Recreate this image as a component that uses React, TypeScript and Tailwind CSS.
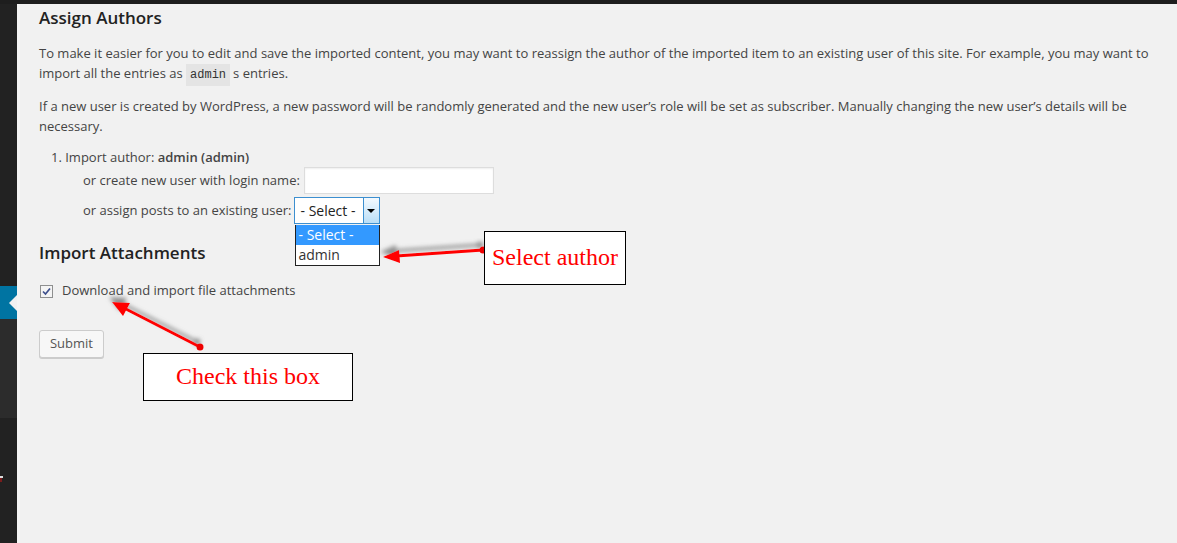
import React from 'react';

function Sidebar() {
    return (
        <div className="flex w-[17px] flex-none flex-col bg-[#222]">
            <div className="h-[282px]" />
            <div className="relative h-[33px] bg-[#0074a2]">
                <span className="absolute top-[9px] right-0 h-0 w-0 border-y-[8px] border-r-[8px] border-y-transparent border-r-[#f1f1f1]" />
            </div>
            <div className="h-[99px] bg-[#2c2c2c]" />
            <div className="relative flex-1">
                <span className="absolute top-[58px] left-0 h-[2px] w-[3px] bg-[#ddd]" />
                <span className="absolute top-[60px] left-0 h-[4px] w-[2px] bg-[#7a1c1c]" />
            </div>
        </div>
    );
}

function Arrows() {
    return (
        <svg className="pointer-events-none absolute inset-0" width="1177" height="543">
            <defs>
                <filter id="sh" x="-20%" y="-50%" width="140%" height="200%">
                    <feDropShadow dx="-3" dy="-5" stdDeviation="2" floodColor="#777" floodOpacity="0.8" />
                </filter>
            </defs>
            <g filter="url(#sh)">
                <line x1="483" y1="250" x2="396" y2="256" stroke="#f00" strokeWidth="3" strokeLinecap="round" />
                <polygon points="383,257 399,250 400,263" fill="#f00" />
                <circle cx="483" cy="250" r="3.5" fill="#e00" />
            </g>
            <g filter="url(#sh)">
                <line x1="200" y1="347" x2="124" y2="308" stroke="#f00" strokeWidth="3" strokeLinecap="round" />
                <polygon points="112,302 130,303 123,316" fill="#f00" />
                <circle cx="200" cy="347" r="3.5" fill="#e00" />
            </g>
        </svg>
    );
}

export default function App() {
    return (
        <div
            className="relative flex h-[543px] w-[1177px] flex-col overflow-hidden bg-[#f1f1f1] text-[13px] text-[#444]"
            style={{ fontFamily: '"Open Sans", sans-serif' }}
        >
            <div className="h-[4px] flex-none bg-[#1e1e1e]" />
            <div className="flex flex-1">
                <Sidebar />
                <div className="w-[3px] flex-none bg-[#f5f5f5]" />
                <div className="flex flex-1 flex-col pr-[20px] pl-[19px]">
                    <h3 className="mt-[2px] h-[24px] text-[17px] leading-[24px] font-semibold text-[#222]">
                        Assign Authors
                    </h3>
                    <p className="mt-[13px] leading-[20px]">
                        To make it easier for you to edit and save the imported content, you may want to reassign the author of the imported item to an existing user of this site. For example, you may want to import all the entries as{' '}
                        <code className="bg-[#e4e4e4] px-[4px] py-[4px] text-[12px] leading-none text-[#333]" style={{ fontFamily: '"Liberation Mono", monospace' }}>
                            admin
                        </code>
                        <span className="ml-[3px]">s entries.</span>
                    </p>
                    <p className="mt-[13px] leading-[20px]">
                        If a new user is created by WordPress, a new password will be randomly generated and the new user’s role will be set as subscriber. Manually changing the new user’s details will be necessary.
                    </p>
                    <div className="mt-[11px] flex flex-col pl-[12px]">
                        <div className="h-[20px] leading-[20px]">
                            1. Import author: <span className="font-semibold">admin (admin)</span>
                        </div>
                        <div className="flex h-[27px] items-center pl-[32px]">
                            <span>or create new user with login name:</span>
                            <div className="ml-[4px] h-[27px] w-[190px] border border-[#ddd] bg-white shadow-[inset_0_1px_2px_rgba(0,0,0,0.07)]" />
                        </div>
                        <div className="mt-[3px] flex h-[27px] items-center pl-[32px]">
                            <span>or assign posts to an existing user:</span>
                            <div className="relative ml-[2px] flex h-[27px] w-[86px] border border-[#3c8fd0] bg-white">
                                <div className="flex flex-1 items-center pl-[6px] text-[14px] text-[#222]">- Select -</div>
                                <div className="flex w-[16px] items-center justify-center border-l border-[#3c8fd0] bg-gradient-to-b from-[#f4faff] to-[#b9def7]">
                                    <span className="h-0 w-0 border-x-[4px] border-t-[4px] border-x-transparent border-t-black" />
                                </div>
                                <div className="absolute top-[27px] left-0 z-10 flex w-[85px] flex-col border border-t-0 border-[#222] bg-white text-[14px]">
                                    <div className="h-[20px] bg-[#3399ff] pl-[3px] leading-[20px] text-white">- Select -</div>
                                    <div className="h-[20px] pl-[3px] leading-[20px] text-[#333]">admin</div>
                                </div>
                            </div>
                        </div>
                    </div>
                    <h3 className="mt-[17px] h-[24px] text-[17px] leading-[24px] font-semibold text-[#222]">
                        Import Attachments
                    </h3>
                    <label className="mt-[16px] flex h-[20px] items-center">
                        <span className="ml-[1px] flex h-[13px] w-[13px] items-center justify-center border border-[#8e8f8f] bg-[#f4f4f4]">
                            <svg width="9" height="9" viewBox="0 0 9 9">
                                <path d="M1 4.5 L3.5 7 L8 1.5" fill="none" stroke="#3d4f8c" strokeWidth="1.7" />
                            </svg>
                        </span>
                        <span className="ml-[9px]">Download and import file attachments</span>
                    </label>
                    <div className="mt-[29px]">
                        <button
                            type="button"
                            className="h-[28px] w-[65px] rounded-[3px] border border-[#ccc] bg-[#f7f7f7] text-[13px] text-[#555] shadow-[0_1px_0_#ccc]"
                        >
                            Submit
                        </button>
                    </div>
                </div>
            </div>

            <Arrows />

            <div
                className="absolute top-[231px] left-[484px] flex h-[54px] w-[142px] items-center justify-center border border-black bg-white pb-[3px] text-[24px] text-[#f00]"
                style={{ fontFamily: '"Liberation Serif", serif' }}
            >
                Select author
            </div>
            <div
                className="absolute top-[353px] left-[143px] flex h-[48px] w-[210px] items-center justify-center border border-black bg-white pb-[3px] text-[24px] text-[#f00]"
                style={{ fontFamily: '"Liberation Serif", serif' }}
            >
                Check this box
            </div>
        </div>
    );
}
